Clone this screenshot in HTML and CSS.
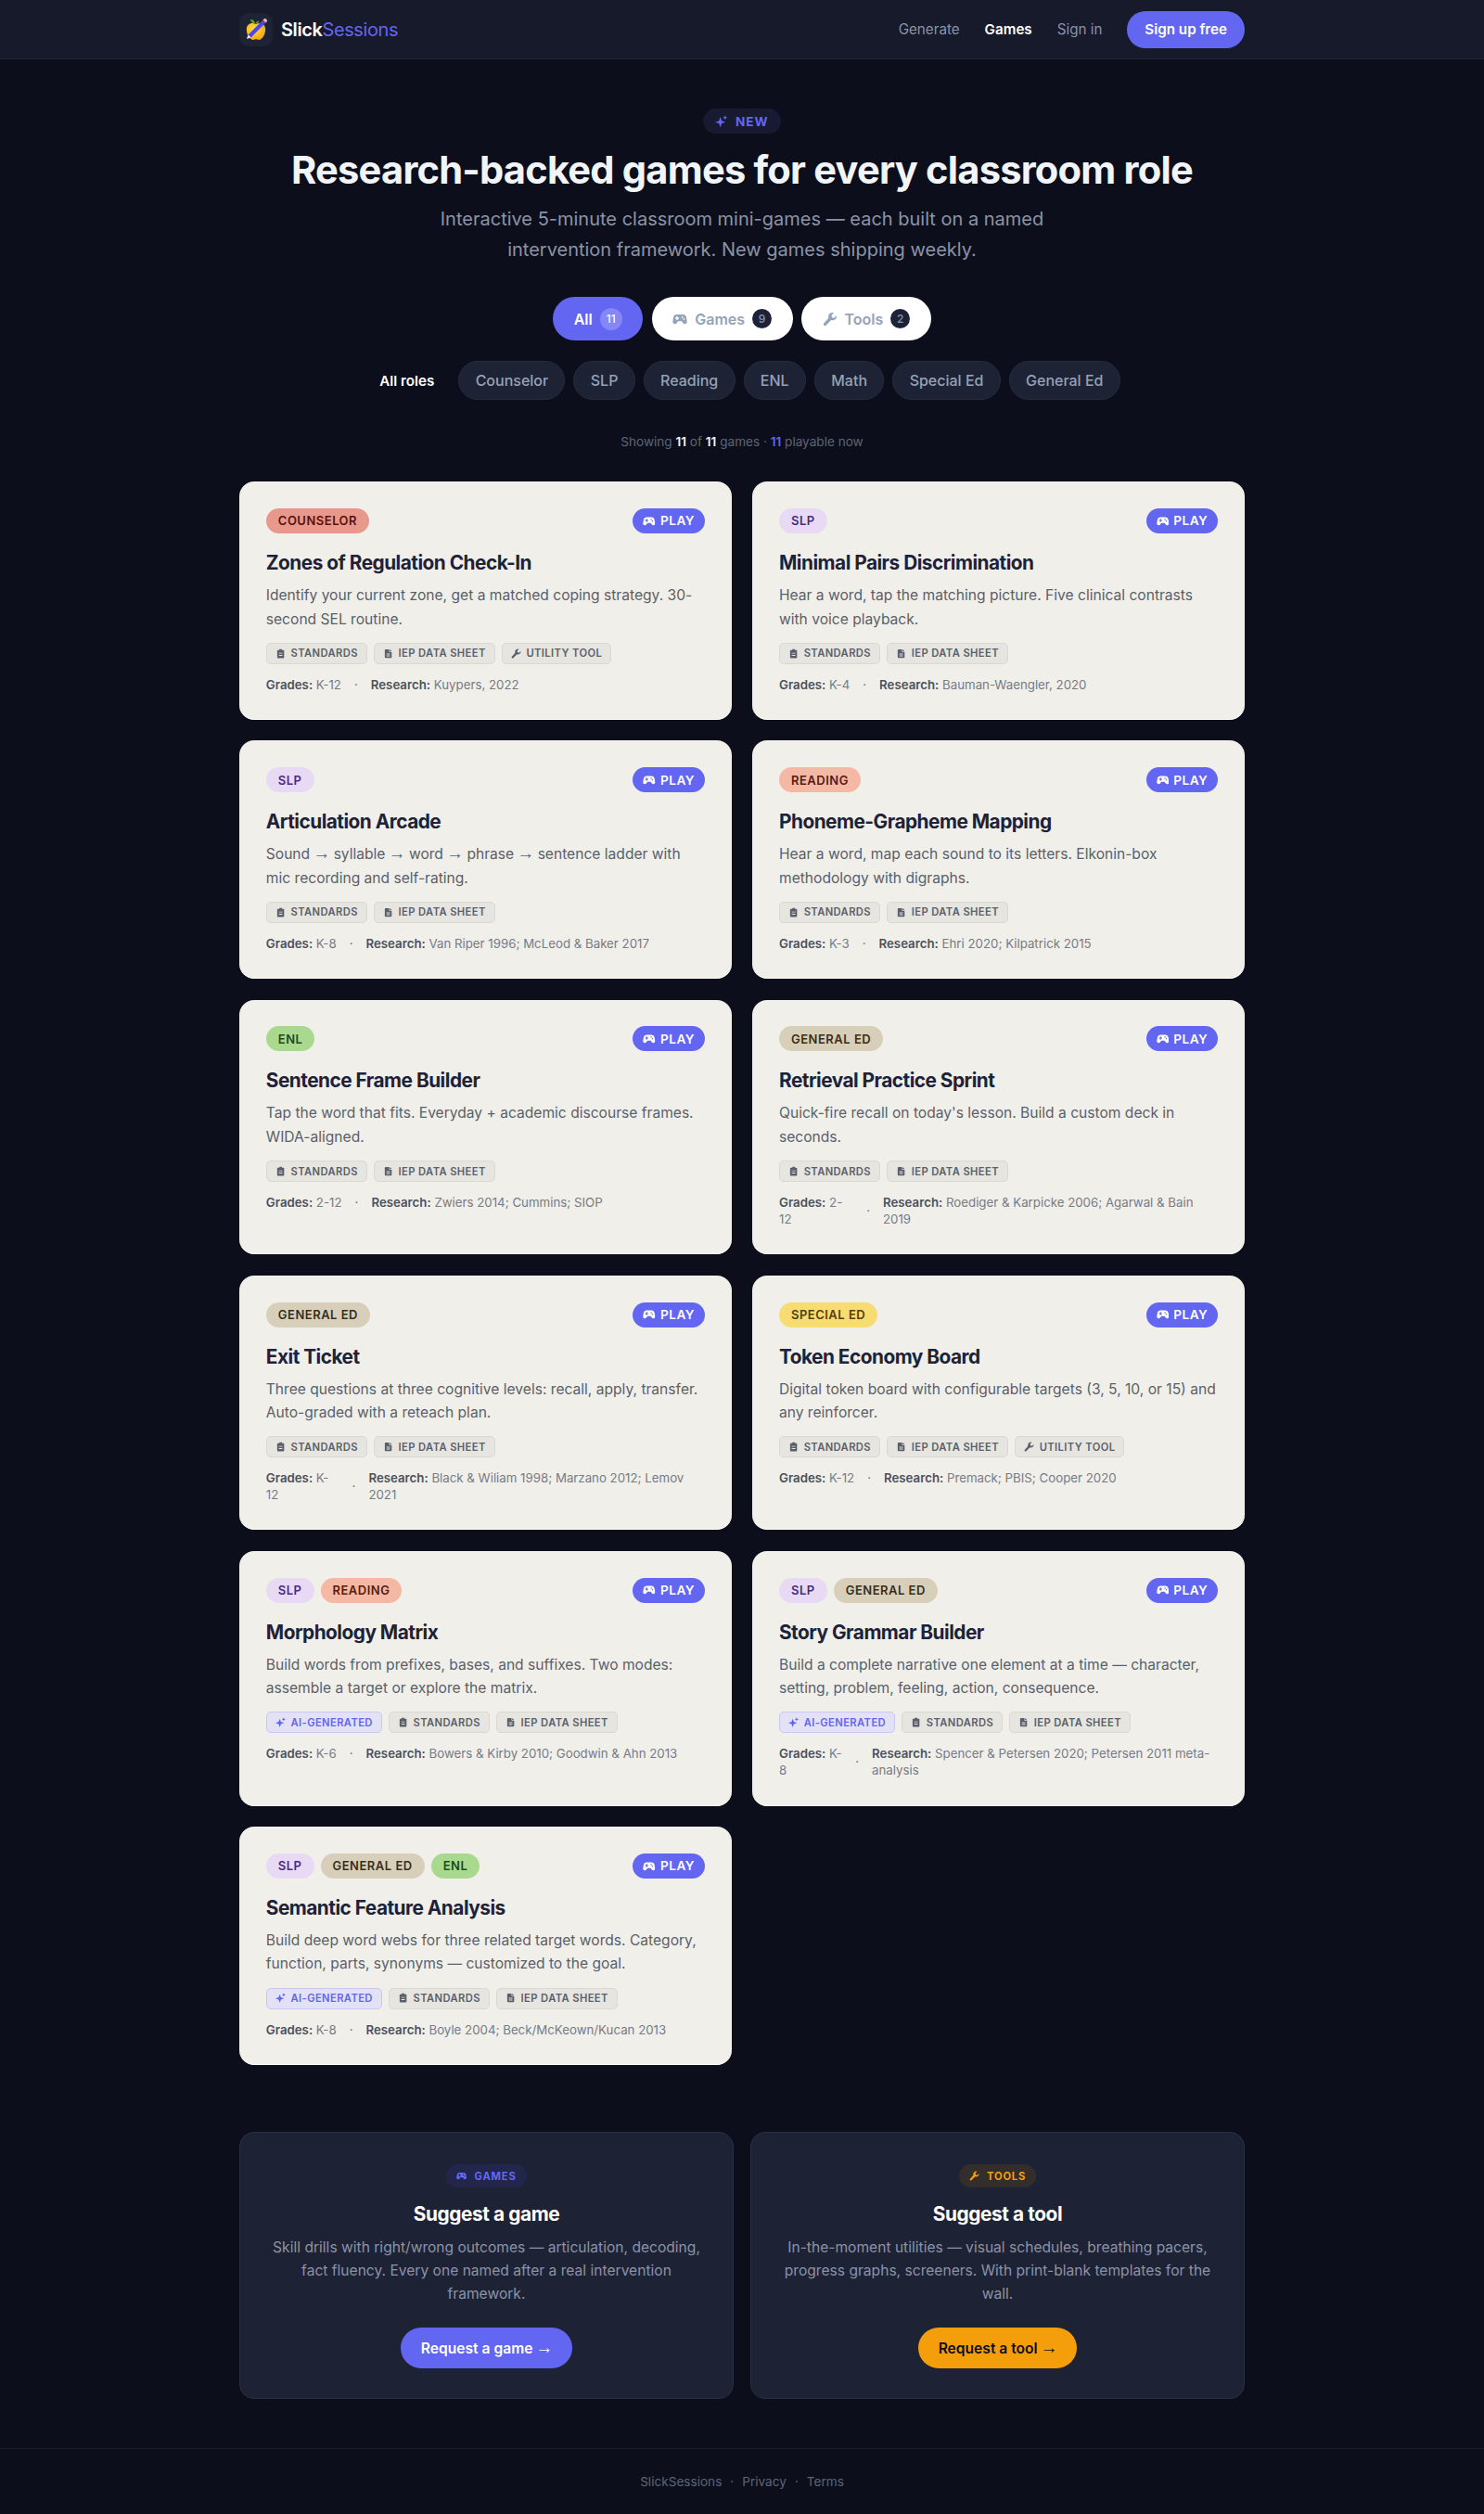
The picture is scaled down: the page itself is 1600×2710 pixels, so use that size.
FILE: index.html
```html
<!doctype html>
<html>
<head>
  <meta charset="utf-8">
  <title>Games - SlickSessions</title>
  <link rel="stylesheet" href="styles.css">
</head>
<body>

<svg class="defs" width="0" height="0">
  <symbol id="i-pad" viewBox="0 0 24 24"><path fill-rule="evenodd" d="M7 4.5h10a5.5 5.5 0 0 1 5.4 4.6l1.1 6.6a3.5 3.5 0 0 1-6.1 2.9L15 15.5H9l-2.4 3.1a3.5 3.5 0 0 1-6.1-2.9l1.100-6.600A5.500 5.500 0 0 1 7 4.500zM6.500 7.500v2h-2v2h2v2h2v-2h2v-2h-2v-2zM16 7.500a1.300 1.300 0 1 0 0 2.600a1.300 1.300 0 0 0 0-2.600zM18.500 10.500a1.300 1.300 0 1 0 0 2.600a1.300 1.300 0 0 0 0-2.600z"/></symbol>
  <symbol id="i-wrench" viewBox="0 0 24 24"><path d="M22.600 6.300l-3.900 3.900-3.600-.9-.9-3.600 3.900-3.900a6.700 6.700 0 0 0-8.600 8.500L2 18.800a2.300 2.300 0 0 0 0 3.200a2.300 2.300 0 0 0 3.200 0l8.500-8.400a6.700 6.700 0 0 0 8.900-7.300z"/></symbol>
  <symbol id="i-clip" viewBox="0 0 24 24"><path fill-rule="evenodd" d="M9 1.500h6v2h3.500a1.500 1.500 0 0 1 1.500 1.500v16a1.500 1.500 0 0 1-1.500 1.500H5.500a1.500 1.500 0 0 1-1.500-1.500V5a1.500 1.500 0 0 1 1.500-1.500H9zM8 10v2h8v-2zM8 15v2h8v-2z"/></symbol>
  <symbol id="i-file" viewBox="0 0 24 24"><path fill-rule="evenodd" d="M6 2h8v6h6v12a2 2 0 0 1-2 2H6a2 2 0 0 1-2-2V4a2 2 0 0 1 2-2zM8 12v2h8v-2zM8 16v2h8v-2zM15.500 2l4.500 4.500h-4.500z"/></symbol>
  <symbol id="i-spark" viewBox="0 0 24 24"><path d="M10 3.500l2.600 7.400 7.400 2.600-7.400 2.600L10 23.500l-2.600-7.400L0 13.500l7.400-2.600zM19 .5l1.300 3.200 3.200 1.300-3.200 1.300L19 9.500l-1.300-3.200L14.500 5l3.200-1.300z"/></symbol>
</svg>

<header class="nav">
  <div class="nav_inner">
    <a class="brand">
      <span class="brand_logo">
        <svg width="28" height="28" viewBox="0 0 28 28">
          <defs>
            <radialGradient id="apple" cx="40%" cy="35%" r="75%">
              <stop offset="0" stop-color="#fde047"/>
              <stop offset="1" stop-color="#f59e0b"/>
            </radialGradient>
          </defs>
          <path fill="url(#apple)" d="M14 8c3-2 9-1.500 10 4c1 6-3 13-7 13c-1.500 0-2-.7-3-.7s-1.500 .7-3 .7c-4 0-8-7-7-13c1-5.500 7-6 10-4z"/>
          <path fill="#65a30d" d="M13 8C10 7 8 5 8 3c3 0 5 1.500 5 5zM13.500 7.500c.5-2 2-3 4-3c-.5 2-2 3-4 3z"/>
          <path fill="#4f46e5" d="M21.500 3.500l3 3L8.500 22.500l-3-3z"/>
          <path fill="#f9a8a8" d="M21.500 3.500l1.200-1.200a1.500 1.500 0 0 1 2 0l1 1a1.500 1.500 0 0 1 0 2l-1.200 1.200z"/>
          <path fill="#fde9c8" d="M5.500 19.500l3 3L4 24z"/>
        </svg>
      </span>
      <span class="brand_name">Slick<span>Sessions</span></span>
    </a>
    <nav class="nav_links">
      <a>Generate</a>
      <a class="active">Games</a>
      <a>Sign in</a>
      <a class="btn_signup">Sign up free</a>
    </nav>
  </div>
</header>

<section class="hero">
  <div class="badge"><svg class="ico"><use href="#i-spark"/></svg>NEW</div>
  <h1>Research-backed games for every classroom role</h1>
  <p>Interactive 5-minute classroom mini-games — each built on a named<br>intervention framework. New games shipping weekly.</p>
</section>

<div class="tabs">
  <a class="tab tab_on">All <span class="count">11</span></a>
  <a class="tab"><svg class="ico"><use href="#i-pad"/></svg>Games <span class="count">9</span></a>
  <a class="tab"><svg class="ico"><use href="#i-wrench"/></svg>Tools <span class="count">2</span></a>
</div>

<div class="roles">
  <a class="role_all">All roles</a>
  <a class="role">Counselor</a>
  <a class="role">SLP</a>
  <a class="role">Reading</a>
  <a class="role">ENL</a>
  <a class="role">Math</a>
  <a class="role">Special Ed</a>
  <a class="role">General Ed</a>
</div>

<p class="showing">Showing <b>11</b> of <b>11</b> games · <b class="accent">11</b> playable now</p>

<main class="grid">

  <article class="card">
    <div class="card_top"><div class="pills"><span class="pill counselor">COUNSELOR</span></div><span class="play"><svg class="ico"><use href="#i-pad"/></svg>PLAY</span></div>
    <h3>Zones of Regulation Check-In</h3>
    <p class="desc">Identify your current zone, get a matched coping strategy. 30-second SEL routine.</p>
    <div class="tags">
      <span class="tag"><svg class="ico"><use href="#i-clip"/></svg>STANDARDS</span>
      <span class="tag"><svg class="ico"><use href="#i-file"/></svg>IEP DATA SHEET</span>
      <span class="tag"><svg class="ico"><use href="#i-wrench"/></svg>UTILITY TOOL</span>
    </div>
    <div class="meta"><span><b>Grades:</b> K-12</span><i>·</i><span><b>Research:</b> Kuypers, 2022</span></div>
  </article>

  <article class="card">
    <div class="card_top"><div class="pills"><span class="pill slp">SLP</span></div><span class="play"><svg class="ico"><use href="#i-pad"/></svg>PLAY</span></div>
    <h3>Minimal Pairs Discrimination</h3>
    <p class="desc">Hear a word, tap the matching picture. Five clinical contrasts with voice playback.</p>
    <div class="tags">
      <span class="tag"><svg class="ico"><use href="#i-clip"/></svg>STANDARDS</span>
      <span class="tag"><svg class="ico"><use href="#i-file"/></svg>IEP DATA SHEET</span>
    </div>
    <div class="meta"><span><b>Grades:</b> K-4</span><i>·</i><span><b>Research:</b> Bauman-Waengler, 2020</span></div>
  </article>

  <article class="card">
    <div class="card_top"><div class="pills"><span class="pill slp">SLP</span></div><span class="play"><svg class="ico"><use href="#i-pad"/></svg>PLAY</span></div>
    <h3>Articulation Arcade</h3>
    <p class="desc">Sound <span class="arr">→</span> syllable <span class="arr">→</span> word <span class="arr">→</span> phrase <span class="arr">→</span> sentence ladder with mic recording and self-rating.</p>
    <div class="tags">
      <span class="tag"><svg class="ico"><use href="#i-clip"/></svg>STANDARDS</span>
      <span class="tag"><svg class="ico"><use href="#i-file"/></svg>IEP DATA SHEET</span>
    </div>
    <div class="meta"><span><b>Grades:</b> K-8</span><i>·</i><span><b>Research:</b> Van Riper 1996; McLeod &amp; Baker 2017</span></div>
  </article>

  <article class="card">
    <div class="card_top"><div class="pills"><span class="pill reading">READING</span></div><span class="play"><svg class="ico"><use href="#i-pad"/></svg>PLAY</span></div>
    <h3>Phoneme-Grapheme Mapping</h3>
    <p class="desc">Hear a word, map each sound to its letters. Elkonin-box methodology with digraphs.</p>
    <div class="tags">
      <span class="tag"><svg class="ico"><use href="#i-clip"/></svg>STANDARDS</span>
      <span class="tag"><svg class="ico"><use href="#i-file"/></svg>IEP DATA SHEET</span>
    </div>
    <div class="meta"><span><b>Grades:</b> K-3</span><i>·</i><span><b>Research:</b> Ehri 2020; Kilpatrick 2015</span></div>
  </article>

  <article class="card">
    <div class="card_top"><div class="pills"><span class="pill enl">ENL</span></div><span class="play"><svg class="ico"><use href="#i-pad"/></svg>PLAY</span></div>
    <h3>Sentence Frame Builder</h3>
    <p class="desc">Tap the word that fits. Everyday + academic discourse frames. WIDA-aligned.</p>
    <div class="tags">
      <span class="tag"><svg class="ico"><use href="#i-clip"/></svg>STANDARDS</span>
      <span class="tag"><svg class="ico"><use href="#i-file"/></svg>IEP DATA SHEET</span>
    </div>
    <div class="meta"><span><b>Grades:</b> 2-12</span><i>·</i><span><b>Research:</b> Zwiers 2014; Cummins; SIOP</span></div>
  </article>

  <article class="card">
    <div class="card_top"><div class="pills"><span class="pill gened">GENERAL ED</span></div><span class="play"><svg class="ico"><use href="#i-pad"/></svg>PLAY</span></div>
    <h3>Retrieval Practice Sprint</h3>
    <p class="desc">Quick-fire recall on today's lesson. Build a custom deck in seconds.</p>
    <div class="tags">
      <span class="tag"><svg class="ico"><use href="#i-clip"/></svg>STANDARDS</span>
      <span class="tag"><svg class="ico"><use href="#i-file"/></svg>IEP DATA SHEET</span>
    </div>
    <div class="meta"><span><b>Grades:</b> 2-12</span><i>·</i><span><b>Research:</b> Roediger &amp; Karpicke 2006; Agarwal &amp; Bain 2019</span></div>
  </article>

  <article class="card">
    <div class="card_top"><div class="pills"><span class="pill gened">GENERAL ED</span></div><span class="play"><svg class="ico"><use href="#i-pad"/></svg>PLAY</span></div>
    <h3>Exit Ticket</h3>
    <p class="desc">Three questions at three cognitive levels: recall, apply, transfer. Auto-graded with a reteach plan.</p>
    <div class="tags">
      <span class="tag"><svg class="ico"><use href="#i-clip"/></svg>STANDARDS</span>
      <span class="tag"><svg class="ico"><use href="#i-file"/></svg>IEP DATA SHEET</span>
    </div>
    <div class="meta"><span><b>Grades:</b> K-12</span><i>·</i><span><b>Research:</b> Black &amp; Wiliam 1998; Marzano 2012; Lemov 2021</span></div>
  </article>

  <article class="card">
    <div class="card_top"><div class="pills"><span class="pill sped">SPECIAL ED</span></div><span class="play"><svg class="ico"><use href="#i-pad"/></svg>PLAY</span></div>
    <h3>Token Economy Board</h3>
    <p class="desc">Digital token board with configurable targets (3, 5, 10, or 15) and any reinforcer.</p>
    <div class="tags">
      <span class="tag"><svg class="ico"><use href="#i-clip"/></svg>STANDARDS</span>
      <span class="tag"><svg class="ico"><use href="#i-file"/></svg>IEP DATA SHEET</span>
      <span class="tag"><svg class="ico"><use href="#i-wrench"/></svg>UTILITY TOOL</span>
    </div>
    <div class="meta"><span><b>Grades:</b> K-12</span><i>·</i><span><b>Research:</b> Premack; PBIS; Cooper 2020</span></div>
  </article>

  <article class="card">
    <div class="card_top"><div class="pills"><span class="pill slp">SLP</span><span class="pill reading">READING</span></div><span class="play"><svg class="ico"><use href="#i-pad"/></svg>PLAY</span></div>
    <h3>Morphology Matrix</h3>
    <p class="desc">Build words from prefixes, bases, and suffixes. Two modes: assemble a target or explore the matrix.</p>
    <div class="tags">
      <span class="tag tag_ai"><svg class="ico"><use href="#i-spark"/></svg>AI-GENERATED</span>
      <span class="tag"><svg class="ico"><use href="#i-clip"/></svg>STANDARDS</span>
      <span class="tag"><svg class="ico"><use href="#i-file"/></svg>IEP DATA SHEET</span>
    </div>
    <div class="meta"><span><b>Grades:</b> K-6</span><i>·</i><span><b>Research:</b> Bowers &amp; Kirby 2010; Goodwin &amp; Ahn 2013</span></div>
  </article>

  <article class="card">
    <div class="card_top"><div class="pills"><span class="pill slp">SLP</span><span class="pill gened">GENERAL ED</span></div><span class="play"><svg class="ico"><use href="#i-pad"/></svg>PLAY</span></div>
    <h3>Story Grammar Builder</h3>
    <p class="desc">Build a complete narrative one element at a time — character, setting, problem, feeling, action, consequence.</p>
    <div class="tags">
      <span class="tag tag_ai"><svg class="ico"><use href="#i-spark"/></svg>AI-GENERATED</span>
      <span class="tag"><svg class="ico"><use href="#i-clip"/></svg>STANDARDS</span>
      <span class="tag"><svg class="ico"><use href="#i-file"/></svg>IEP DATA SHEET</span>
    </div>
    <div class="meta"><span><b>Grades:</b> K-8</span><i>·</i><span><b>Research:</b> Spencer &amp; Petersen 2020; Petersen 2011 meta-analysis</span></div>
  </article>

  <article class="card">
    <div class="card_top"><div class="pills"><span class="pill slp">SLP</span><span class="pill gened">GENERAL ED</span><span class="pill enl">ENL</span></div><span class="play"><svg class="ico"><use href="#i-pad"/></svg>PLAY</span></div>
    <h3>Semantic Feature Analysis</h3>
    <p class="desc">Build deep word webs for three related target words. Category, function, parts, synonyms — customized to the goal.</p>
    <div class="tags">
      <span class="tag tag_ai"><svg class="ico"><use href="#i-spark"/></svg>AI-GENERATED</span>
      <span class="tag"><svg class="ico"><use href="#i-clip"/></svg>STANDARDS</span>
      <span class="tag"><svg class="ico"><use href="#i-file"/></svg>IEP DATA SHEET</span>
    </div>
    <div class="meta"><span><b>Grades:</b> K-8</span><i>·</i><span><b>Research:</b> Boyle 2004; Beck/McKeown/Kucan 2013</span></div>
  </article>

</main>

<section class="suggest">
  <div class="suggest_card">
    <span class="suggest_tag"><svg class="ico"><use href="#i-pad"/></svg>GAMES</span>
    <h3>Suggest a game</h3>
    <p>Skill drills with right/wrong outcomes — articulation, decoding, fact fluency. Every one named after a real intervention framework.</p>
    <a class="suggest_btn">Request a game<span class="arr">→</span></a>
  </div>
  <div class="suggest_card tools">
    <span class="suggest_tag"><svg class="ico"><use href="#i-wrench"/></svg>TOOLS</span>
    <h3>Suggest a tool</h3>
    <p>In-the-moment utilities — visual schedules, breathing pacers, progress graphs, screeners. With print-blank templates for the wall.</p>
    <a class="suggest_btn">Request a tool<span class="arr">→</span></a>
  </div>
</section>

<footer class="footer">
  <a>SlickSessions</a><i>·</i><a>Privacy</a><i>·</i><a>Terms</a>
</footer>

</body>
</html>
```

FILE: styles.css
```css
html, body {
  margin: 0;
  background: #0c0f1b;
  color: #f1f5f9;
  font-family: Inter, "Liberation Sans", sans-serif;
}

a { text-decoration: none; color: inherit; }

.defs { position: absolute; }

.ico {
  width: 1em;
  height: 1em;
  fill: currentColor;
  flex: none;
}

.arr {
  font-family: "Liberation Sans", sans-serif;
  font-size: 1.2em;
  line-height: 0;
  margin: 0 -1px;
}

/* nav */
.nav {
  height: 63px;
  background: #161a2b;
  border-bottom: 1px solid #232838;
}

.nav_inner {
  width: 1084px;
  height: 63px;
  margin: 0 auto;
  display: flex;
  align-items: center;
  justify-content: space-between;
}

.brand {
  display: flex;
  align-items: center;
  gap: 9px;
}

.brand_logo {
  width: 36px;
  height: 36px;
  border-radius: 10px;
  background: #1e2335;
  display: flex;
  align-items: center;
  justify-content: center;
}

.brand_name {
  font-size: 20px;
  font-weight: 600;
  letter-spacing: -0.4px;
  color: #ffffff;
}

.brand_name span {
  font-weight: 400;
  color: #6366f1;
}

.nav_links {
  display: flex;
  align-items: center;
  gap: 27px;
  font-size: 15.2px;
  color: #8b93a7;
}

.nav_links .active {
  color: #ffffff;
  font-weight: 600;
}

.btn_signup {
  height: 40px;
  padding: 0 19px;
  display: flex;
  align-items: center;
  border-radius: 20px;
  background: #6366f1;
  color: #ffffff;
  font-weight: 600;
}

/* hero */
.hero {
  padding-top: 53px;
  text-align: center;
}

.badge {
  display: inline-flex;
  align-items: center;
  gap: 8px;
  height: 27px;
  padding: 0 13px;
  border-radius: 14px;
  background: #171a30;
  color: #6366f1;
  font-size: 13.6px;
  font-weight: 700;
  letter-spacing: 1px;
}

.hero h1 {
  margin: 12px 0 0;
  font-size: 41.6px;
  line-height: 54px;
  font-weight: 700;
  letter-spacing: -0.78px;
  color: #f1f5f9;
}

.hero p {
  margin: 10px 0 0;
  font-size: 20px;
  line-height: 32.6px;
  color: #8b93a7;
}

/* filters */
.tabs {
  margin-top: 35px;
  display: flex;
  justify-content: center;
  gap: 9.5px;
}

.tab {
  height: 47px;
  padding: 0 22.5px;
  display: flex;
  align-items: center;
  gap: 8px;
  border-radius: 24px;
  background: #ffffff;
  color: #94a3b8;
  font-size: 16px;
  font-weight: 600;
}

.tab .count {
  width: 21px;
  height: 21px;
  border-radius: 50%;
  background: #1e2238;
  color: #8b93a7;
  font-size: 12px;
  font-weight: 500;
  display: flex;
  align-items: center;
  justify-content: center;
}

.tab_on {
  background: #6366f1;
  color: #ffffff;
}

.tab_on .count {
  width: 24px;
  height: 24px;
  background: #8487f5;
  color: #ffffff;
}

.roles {
  margin-top: 22px;
  display: flex;
  justify-content: center;
  align-items: center;
  gap: 9px;
  font-size: 16px;
  font-weight: 500;
}

.role_all {
  padding: 0 17px;
  color: #ffffff;
  font-size: 15.2px;
  font-weight: 600;
}

.role {
  height: 42px;
  padding: 0 17.3px;
  display: flex;
  align-items: center;
  box-sizing: border-box;
  border: 1px solid #262b3e;
  border-radius: 21px;
  background: #1e2235;
  color: #94a3b8;
}

.showing {
  margin: 35px 0 0;
  text-align: center;
  font-size: 13.6px;
  line-height: 20px;
  color: #5d6478;
}

.showing b { color: #f1f5f9; font-weight: 600; }
.showing .accent { color: #6366f1; }

/* cards */
.grid {
  width: 1084px;
  margin: 33px auto 0;
  display: grid;
  grid-template-columns: 1fr 1fr;
  gap: 22.4px;
}

.card {
  box-sizing: border-box;
  padding: 28.8px 28.8px 28.3px;
  border-radius: 16px;
  background: #f0efea;
  border-bottom: 1px solid #ffffff;
}

.card_top {
  display: flex;
  justify-content: space-between;
  align-items: center;
}

.pills { display: flex; gap: 7px; }

.pill {
  height: 27px;
  padding: 0 13px;
  display: flex;
  align-items: center;
  border-radius: 14px;
  font-size: 13px;
  font-weight: 600;
  letter-spacing: 0.5px;
}

.counselor { background: #e8998b; color: #5c100a; }
.slp { background: #e8daf4; color: #4c2a85; }
.reading { background: #f4b8a4; color: #5c1a0a; }
.enl { background: #a9d98f; color: #1f4d14; }
.gened { background: #d8cfbb; color: #3a2e18; }
.sped { background: #f6dc72; color: #54400a; }

.play {
  height: 27px;
  padding: 0 11px;
  display: flex;
  align-items: center;
  gap: 5px;
  border-radius: 14px;
  background: #6366f1;
  color: #ffffff;
  font-size: 13.6px;
  font-weight: 600;
  letter-spacing: 0.5px;
}

.card h3 {
  margin: 18px 0 0;
  font-size: 20.8px;
  line-height: 28px;
  font-weight: 700;
  letter-spacing: -0.5px;
  color: #1e2238;
}

.desc {
  margin: 8px 0 0;
  font-size: 15.6px;
  line-height: 25.6px;
  color: #5b5f6b;
}

.tags {
  margin-top: 12.5px;
  display: flex;
  gap: 7px;
}

.tag {
  height: 23px;
  padding: 0 9px;
  display: flex;
  align-items: center;
  gap: 5.5px;
  box-sizing: border-box;
  border: 1px solid #d9d8d2;
  border-radius: 5px;
  background: #e6e5df;
  color: #5b5f6b;
  font-size: 11.2px;
  font-weight: 600;
  letter-spacing: 0.4px;
}

.tag_ai {
  background: #e2e1f6;
  border-color: #c9c8f0;
  color: #6366f1;
}

.meta {
  margin-top: 13px;
  display: flex;
  gap: 14px;
  font-size: 13.28px;
  line-height: 18px;
  color: #787b85;
}

.meta b { color: #4d515c; font-weight: 600; }
.meta i { font-style: normal; align-self: center; }

/* suggest */
.suggest {
  width: 1084px;
  margin: 72.5px auto 0;
  display: flex;
  gap: 18px;
}

.suggest_card {
  flex: 1;
  height: 288px;
  box-sizing: border-box;
  padding-top: 34px;
  border: 1px solid #2a2f43;
  border-radius: 16px;
  background: #1e2235;
  text-align: center;
}

.suggest_tag {
  display: inline-flex;
  align-items: center;
  gap: 8px;
  height: 25px;
  padding: 0 11px;
  border-radius: 13px;
  background: #22264a;
  color: #6366f1;
  font-size: 11.2px;
  font-weight: 700;
  letter-spacing: 0.8px;
}

.tools .suggest_tag {
  background: #332d2c;
  color: #f59e0b;
}

.suggest_card h3 {
  margin: 14px 0 0;
  font-size: 20.8px;
  line-height: 30px;
  font-weight: 700;
  letter-spacing: -0.4px;
  color: #ffffff;
}

.suggest_card p {
  margin: 8px 30px 0;
  font-size: 15.6px;
  line-height: 25px;
  color: #8b93a7;
}

.suggest_btn {
  display: inline-flex;
  align-items: center;
  gap: 4px;
  height: 44px;
  margin-top: 24px;
  padding: 0 22px;
  border-radius: 22px;
  background: #6366f1;
  color: #ffffff;
  font-size: 15.6px;
  font-weight: 600;
}

.tools .suggest_btn {
  background: #f59e0b;
  color: #0b0e1a;
}

/* footer */
.footer {
  margin-top: 53px;
  height: 71px;
  box-sizing: border-box;
  border-top: 1px solid #1a1e2c;
  display: flex;
  align-items: center;
  justify-content: center;
  gap: 9px;
  font-size: 13.6px;
  color: #5d6478;
}

.footer i { font-style: normal; }
```
